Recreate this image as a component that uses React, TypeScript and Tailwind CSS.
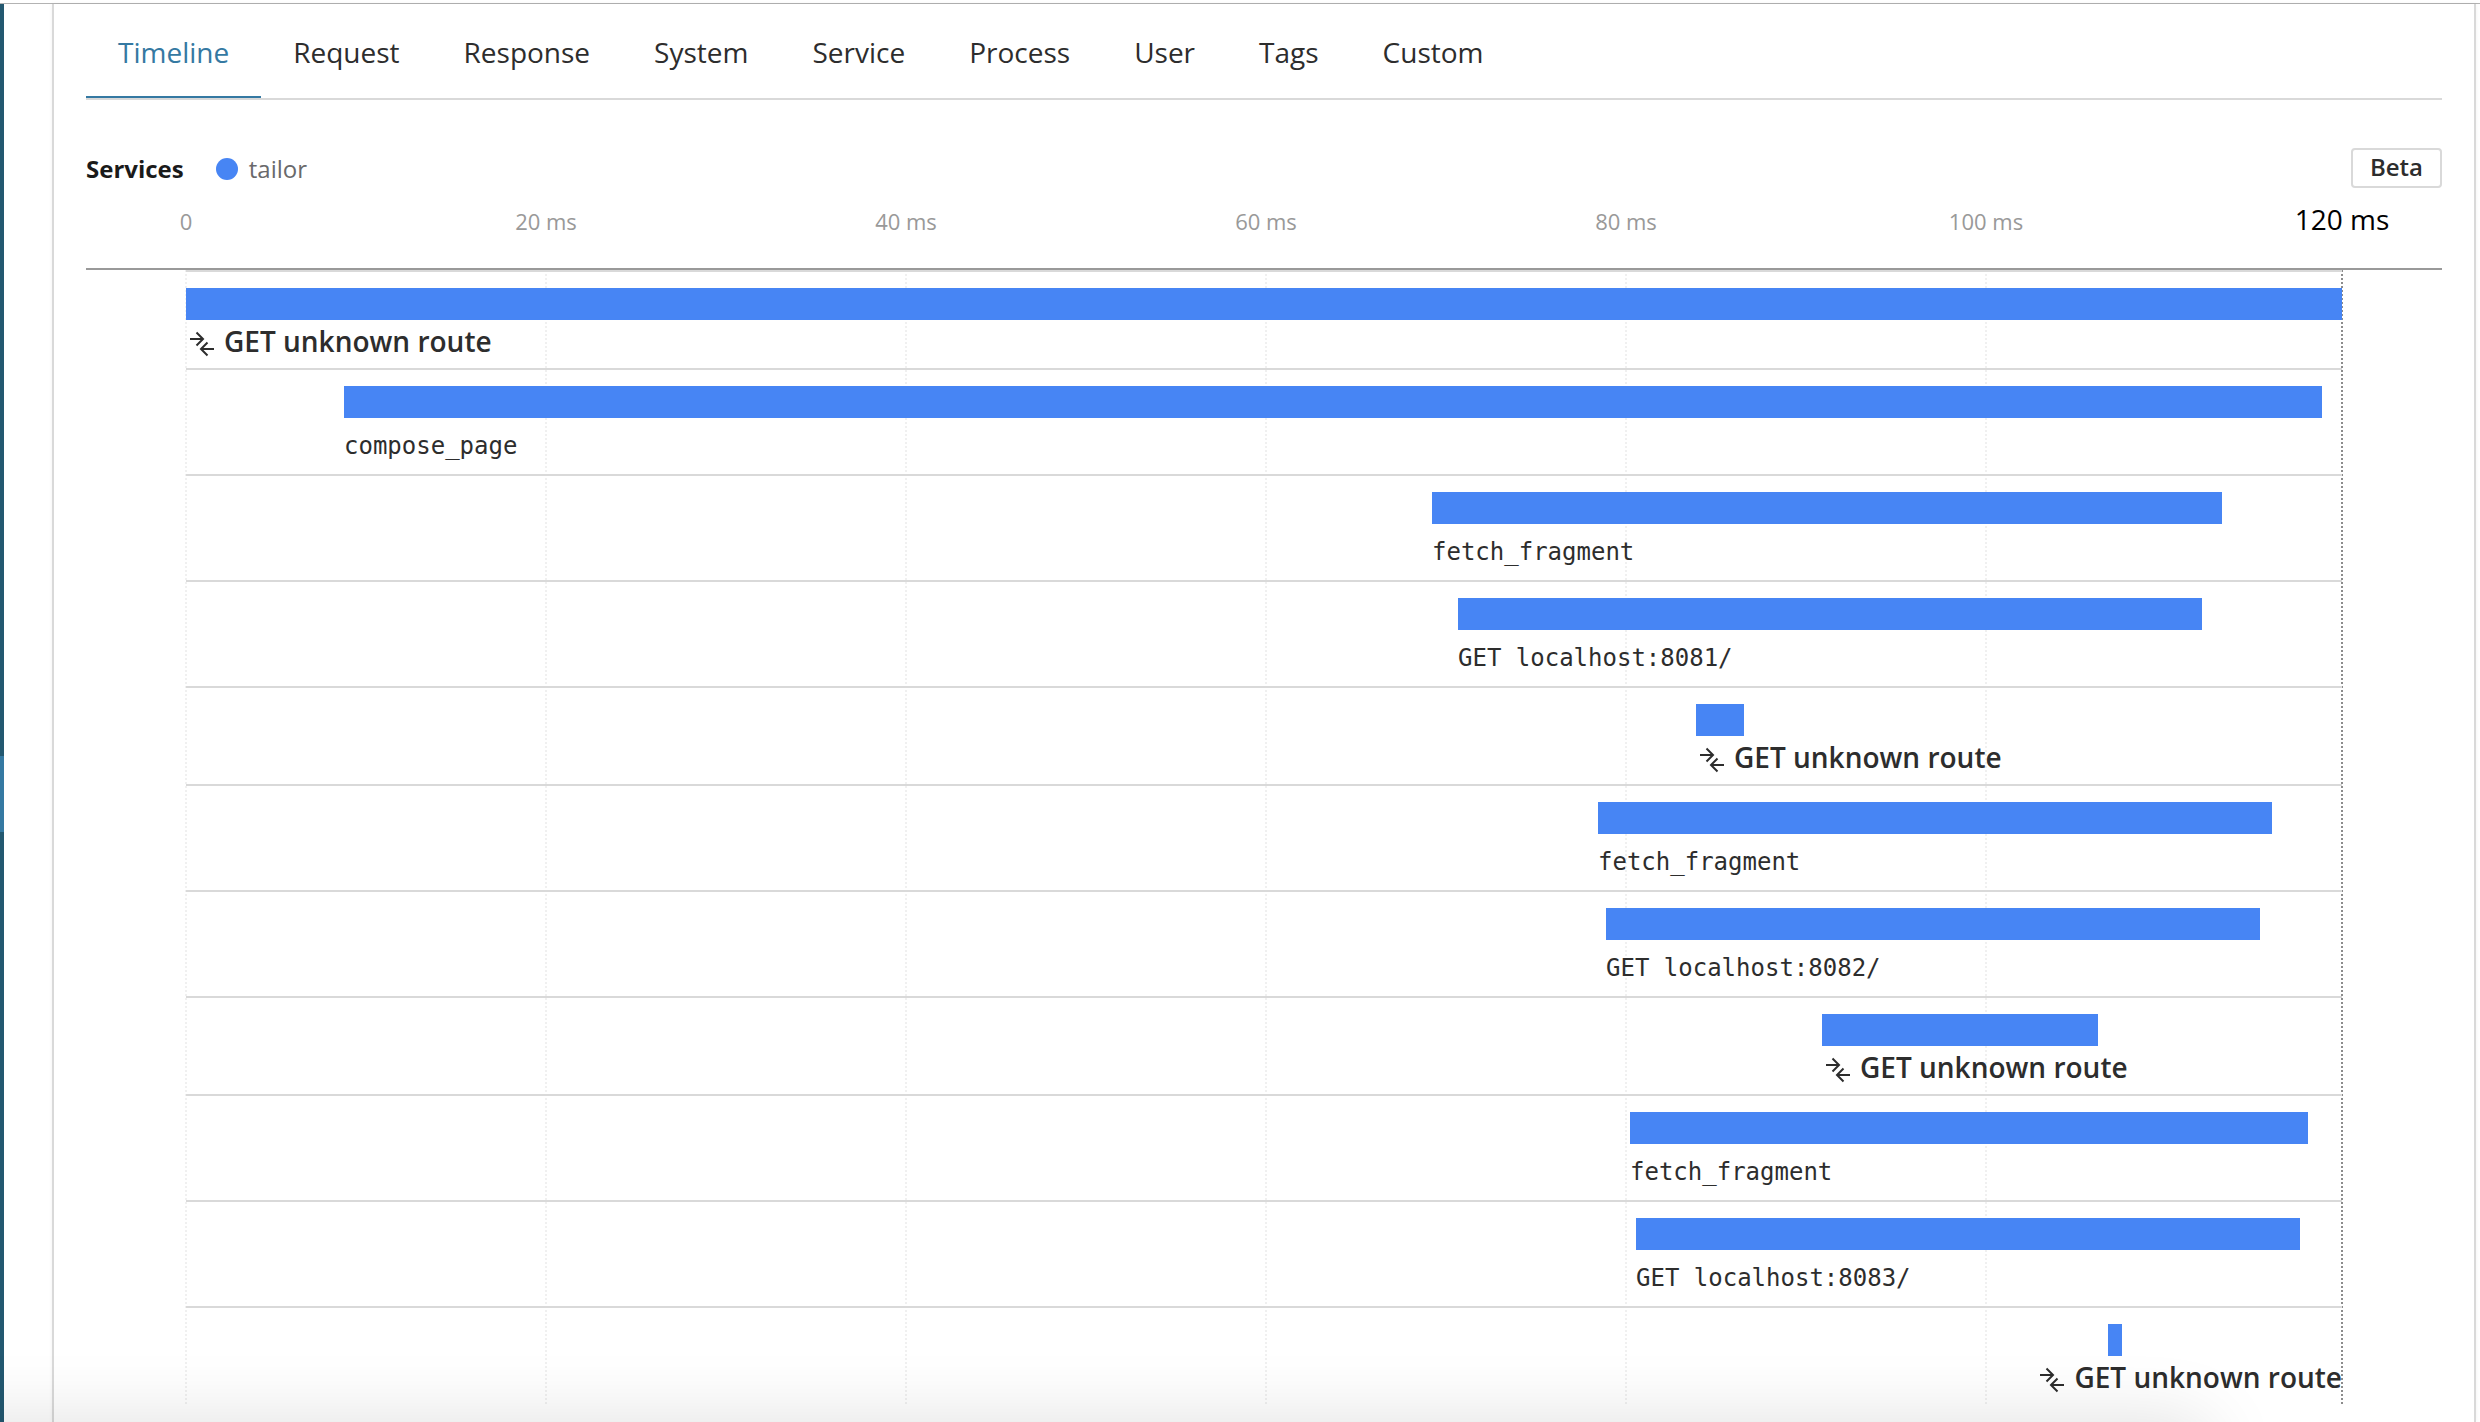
import React from "react";

const TABS = ["Timeline", "Request", "Response", "System", "Service", "Process", "User", "Tags", "Custom"];

// Positions on the time axis, in units of 1/18 ms.
const TOTAL = 2156;
const TICK_STEP = 360;
const TICKS = ["0", "20 ms", "40 ms", "60 ms", "80 ms", "100 ms"];

type Span = { name: string; kind: "transaction" | "span"; start: number; end: number; alignEnd?: boolean };

const SPANS: Span[] = [
  { name: "GET unknown route", kind: "transaction", start: 0, end: 2156 },
  { name: "compose_page", kind: "span", start: 158, end: 2136 },
  { name: "fetch_fragment", kind: "span", start: 1246, end: 2036 },
  { name: "GET localhost:8081/", kind: "span", start: 1272, end: 2016 },
  { name: "GET unknown route", kind: "transaction", start: 1510, end: 1558 },
  { name: "fetch_fragment", kind: "span", start: 1412, end: 2086 },
  { name: "GET localhost:8082/", kind: "span", start: 1420, end: 2074 },
  { name: "GET unknown route", kind: "transaction", start: 1636, end: 1912 },
  { name: "fetch_fragment", kind: "span", start: 1444, end: 2122 },
  { name: "GET localhost:8083/", kind: "span", start: 1450, end: 2114 },
  { name: "GET unknown route", kind: "transaction", start: 1922, end: 1936, alignEnd: true },
];

const pct = (value: number) => `${(value / TOTAL) * 100}%`;

function MergeIcon() {
  return (
    <svg className="size-8 shrink-0" viewBox="0 0 32 32" fill="none" stroke="#2d2d2d" strokeWidth="2" aria-hidden="true">
      <path d="M4 11h13M10.500 4.500l6.500 6.500-6.500 6.500M28 21H15M21.500 14.500L15 21l6.500 6.500" />
    </svg>
  );
}

function SpanRow({ span }: { span: Span }) {
  const transaction = span.kind === "transaction";
  return (
    <li className="border-t-2 border-[#d9d9d9] pt-4">
      <div className="h-8 bg-[#4785f4]" style={{ marginLeft: pct(span.start), width: pct(span.end - span.start) }} />
      <div
        className={span.alignEnd ? "flex justify-end" : "flex"}
        style={span.alignEnd ? undefined : { paddingLeft: pct(span.start) }}
      >
        {transaction ? (
          <span className="flex h-12 items-start gap-1.5 whitespace-nowrap text-[28px] leading-[42px] font-semibold">
            <span className="pt-2">
              <MergeIcon />
            </span>
            {span.name}
          </span>
        ) : (
          <span className="flex h-14 items-start pt-3 font-['DejaVu_Sans_Mono',monospace] text-[24px] leading-8 whitespace-nowrap">
            {span.name}
          </span>
        )}
      </div>
    </li>
  );
}

function GridLine({ at, dark }: { at: number; dark?: boolean }) {
  return (
    <div
      className={
        dark
          ? "absolute inset-y-0 w-[2px] -translate-x-1/2 bg-[repeating-linear-gradient(to_bottom,#8c8c8c_0_2px,transparent_2px_4px)]"
          : "absolute inset-y-0 w-[2px] -translate-x-1/2 bg-[repeating-linear-gradient(to_bottom,#f0f0f0_0_2px,transparent_2px_4px)]"
      }
      style={{ left: pct(at) }}
    />
  );
}

export default function App() {
  return (
    <div className="relative flex min-h-screen flex-col overflow-hidden bg-white pt-[3px] font-['Open_Sans',sans-serif] text-[#2d2d2d]">
      <div className="h-px bg-[#b3b3b3]" />
      <div className="flex grow">
        <aside className="flex w-1 flex-col bg-[#235870]">
          <div className="mt-[752px] h-[76px] bg-[#3579a2]" />
        </aside>
        <main className="mr-1 ml-12 flex-1 border-x-2 border-[#d9d9d9] px-8 shadow-[0_0_4px_rgba(0,0,0,0.06)]">
          <nav className="flex border-b-2 border-[#d9d9d9]" role="tablist">
            {TABS.map((tab, i) => (
              <button
                key={tab}
                role="tab"
                aria-selected={i === 0}
                className={
                  i === 0
                    ? "h-[94px] border-b-2 border-[#3579a2] px-8 pt-7 pb-6 text-[28px] leading-10 text-[#3579a2]"
                    : "h-[94px] border-b-2 border-transparent px-8 pt-7 pb-6 text-[28px] leading-10"
                }
              >
                {tab}
              </button>
            ))}
          </nav>

          <div className="mt-12 flex h-10 items-center text-[24px] leading-9">
            <div className="flex items-center pt-0.5">
              <h2 className="font-bold text-[#1a1a1a]">Services</h2>
              <span className="ml-8 size-[22px] rounded-full bg-[#4785f4]" />
              <span className="ml-[11px] text-[#69696b]">tailor</span>
            </div>
            <span className="ml-auto flex h-10 items-center rounded border-2 border-[#d9d9d9] px-[17px] pb-0.5 font-semibold">
              Beta
            </span>
          </div>

          <div className="h-[82px] border-b-2 border-[#999] px-[100px]">
            <div className="relative h-full">
              {TICKS.map((tick, i) => (
                <span
                  key={tick}
                  className="absolute top-4 -translate-x-1/2 whitespace-nowrap text-[22px] leading-[34px] text-[#999]"
                  style={{ left: pct(i * TICK_STEP) }}
                >
                  {tick}
                </span>
              ))}
              <span className="absolute top-3 left-full -translate-x-1/2 whitespace-nowrap text-[28px] leading-[38px] text-black">
                120 ms
              </span>
            </div>
          </div>

          <div className="relative mx-[100px] mb-4">
            {TICKS.map((tick, i) => (
              <GridLine key={tick} at={i * TICK_STEP} />
            ))}
            <GridLine at={TOTAL} dark />
            <ol className="relative">
              {SPANS.map((span, i) => (
                <SpanRow key={i} span={span} />
              ))}
            </ol>
          </div>
        </main>
      </div>
      <div className="pointer-events-none absolute right-[11%] -bottom-40 -left-40 h-40 shadow-[0_0_72px_rgba(0,0,0,0.13)]" />
    </div>
  );
}
